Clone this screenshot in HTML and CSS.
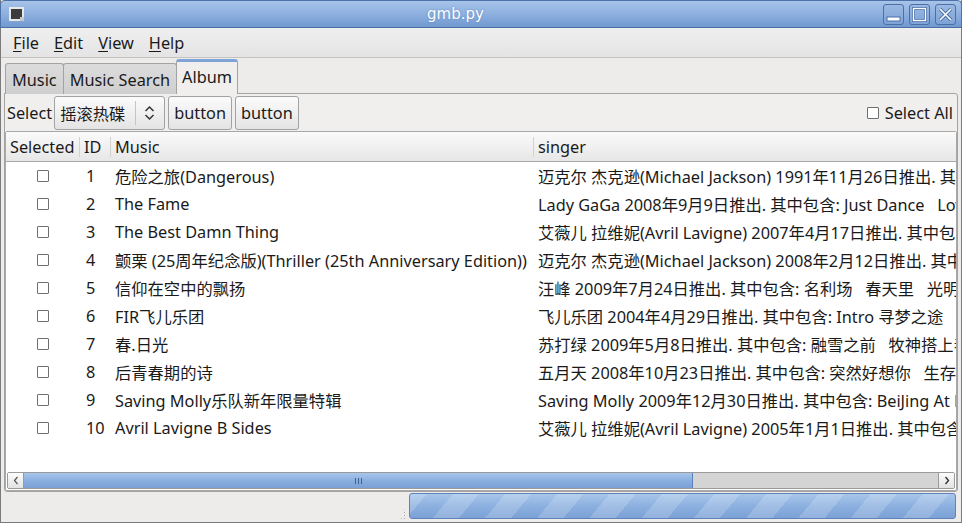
FILE: index.html
```html
<!DOCTYPE html>
<html>
<head>
<meta charset="utf-8">
<title>gmb.py</title>
<link rel="stylesheet" href="styles.css">
</head>
<body>
<div class="window">
  <div class="titlebar">
    <div class="appicon"><div class="appicon-screen"></div></div>
    <div class="title">gmb.py</div>
    <div class="wbtns">
      <div class="wbtn"><svg width="21" height="21" viewBox="0 0 21 21"><rect x="4" y="13" width="13" height="4" fill="#fff" stroke="#4a6ea6" stroke-width="1"/></svg></div>
      <div class="wbtn"><svg width="21" height="21" viewBox="0 0 21 21"><rect x="4.5" y="4.5" width="12" height="12" fill="none" stroke="#4a6ea6" stroke-width="3"/><rect x="4.5" y="4.5" width="12" height="12" fill="none" stroke="#fff" stroke-width="1.4"/></svg></div>
      <div class="wbtn"><svg width="21" height="21" viewBox="0 0 21 21"><path d="M5 5 L16 16 M16 5 L5 16" stroke="#4a6ea6" stroke-width="3.4"/><path d="M5 5 L16 16 M16 5 L5 16" stroke="#fff" stroke-width="1.6"/></svg></div>
    </div>
  </div>
  <div class="menubar">
    <span class="menu"><u>F</u>ile</span>
    <span class="menu"><u>E</u>dit</span>
    <span class="menu"><u>V</u>iew</span>
    <span class="menu"><u>H</u>elp</span>
  </div>
  <div class="notebook">
    <div class="tabs">
      <div class="tab">Music</div>
      <div class="tab">Music Search</div>
      <div class="tab active">Album</div>
    </div>
    <div class="panel">
      <div class="toolbar">
        <span class="label">Select</span>
        <div class="combo">
          <span class="combo-text">摇滚热碟</span>
          <span class="combo-sep"></span>
          <svg class="combo-arrow" width="11" height="16" viewBox="0 0 11 16"><path d="M1.5 6 L5.5 2 L9.5 6 M1.5 10 L5.5 14 L9.5 10" fill="none" stroke="#333" stroke-width="1.5"/></svg>
        </div>
        <div class="btn">button</div>
        <div class="btn">button</div>
        <div class="spacer"></div>
        <label class="selall"><span class="cb"></span>Select All</label>
      </div>
      <div class="tree">
        <div class="thead">
          <div class="th c1">Selected</div>
          <div class="th c2">ID</div>
          <div class="th c3">Music</div>
          <div class="th c4">singer</div>
        </div>
        <div class="tbody">
          <div class="tr"><div class="td c1"><span class="cb"></span></div><div class="td c2">1</div><div class="td c3">危险之旅(Dangerous)</div><div class="td c4">迈克尔 杰克逊(Michael Jackson) 1991年11月26日推出. 其中包含: Jam</div></div>
          <div class="tr"><div class="td c1"><span class="cb"></span></div><div class="td c2">2</div><div class="td c3">The Fame</div><div class="td c4">Lady GaGa 2008年9月9日推出. 其中包含: Just Dance   LoveGame</div></div>
          <div class="tr"><div class="td c1"><span class="cb"></span></div><div class="td c2">3</div><div class="td c3">The Best Damn Thing</div><div class="td c4">艾薇儿 拉维妮(Avril Lavigne) 2007年4月17日推出. 其中包含: Girlfriend</div></div>
          <div class="tr"><div class="td c1"><span class="cb"></span></div><div class="td c2">4</div><div class="td c3">颤栗 (25周年纪念版)(Thriller (25th Anniversary Edition))</div><div class="td c4">迈克尔 杰克逊(Michael Jackson) 2008年2月12日推出. 其中包含: Thriller</div></div>
          <div class="tr"><div class="td c1"><span class="cb"></span></div><div class="td c2">5</div><div class="td c3">信仰在空中的飘扬</div><div class="td c4">汪峰 2009年7月24日推出. 其中包含: 名利场   春天里   光明</div></div>
          <div class="tr"><div class="td c1"><span class="cb"></span></div><div class="td c2">6</div><div class="td c3">FIR飞儿乐团</div><div class="td c4">飞儿乐团 2004年4月29日推出. 其中包含: Intro 寻梦之途   我们的爱</div></div>
          <div class="tr"><div class="td c1"><span class="cb"></span></div><div class="td c2">7</div><div class="td c3">春.日光</div><div class="td c4">苏打绿 2009年5月8日推出. 其中包含: 融雪之前   牧神搭上春</div></div>
          <div class="tr"><div class="td c1"><span class="cb"></span></div><div class="td c2">8</div><div class="td c3">后青春期的诗</div><div class="td c4">五月天 2008年10月23日推出. 其中包含: 突然好想你   生存以上</div></div>
          <div class="tr"><div class="td c1"><span class="cb"></span></div><div class="td c2">9</div><div class="td c3">Saving Molly乐队新年限量特辑</div><div class="td c4">Saving Molly 2009年12月30日推出. 其中包含: BeiJing At Night</div></div>
          <div class="tr"><div class="td c1"><span class="cb"></span></div><div class="td c2">10</div><div class="td c3">Avril Lavigne B Sides</div><div class="td c4">艾薇儿 拉维妮(Avril Lavigne) 2005年1月1日推出. 其中包含: Fall</div></div>
        </div>
        <div class="hscroll">
          <div class="sb-arrow"><svg width="8" height="9" viewBox="0 0 8 9"><path d="M5.5 1 L2.5 4.5 L5.5 8" fill="none" stroke="#555" stroke-width="1.2"/></svg></div>
          <div class="sb-trough">
            <div class="sb-thumb"><span class="grip"></span></div>
          </div>
          <div class="sb-arrow"><svg width="8" height="9" viewBox="0 0 8 9"><path d="M2.5 1 L5.5 4.5 L2.5 8" fill="none" stroke="#333" stroke-width="1.4"/></svg></div>
        </div>
      </div>
    </div>
  </div>
  <div class="statusbar">
    <div class="status-text"></div>
    <div class="resize-grip"></div>
    <div class="progress"></div>
  </div>
</div>
</body>
</html>
```
FILE: styles.css
```css
html, body {
  margin: 0;
  padding: 0;
  background: #edeceb;
}
body {
  width: 962px;
  height: 523px;
  overflow: hidden;
  font-family: "Noto Sans", "Noto Sans CJK SC", sans-serif;
  font-size: 15px;
  color: #1a1a1a;
}
.window {
  width: 962px;
  height: 523px;
  box-sizing: border-box;
  display: flex;
  flex-direction: column;
  border-left: 1px solid #7b7b7b;
  border-right: 1px solid #7b7b7b;
  border-bottom: 1px solid #7b7b7b;
  background: #edeceb;
}
.titlebar {
  height: 28px;
  margin: 0 -1px;
  box-sizing: border-box;
  display: flex;
  align-items: center;
  background: linear-gradient(#a7c4e9, #8db0df 50%, #7199d0);
  border: 1px solid #4d72a9;
  border-bottom: 1px solid #4a6ea6;
  border-radius: 5px 5px 0 0;
  position: relative;
  flex: none;
}
.appicon {
  width: 15px;
  height: 14px;
  margin-left: 8px;
  box-sizing: border-box;
  border: 2px solid #e8e8e8;
  background: #3a3d3c;
  position: relative;
}
.appicon-screen {
  position: absolute;
  right: -2px;
  bottom: -2px;
  width: 4px;
  height: 4px;
  background: #c8c8c8;
}
.title {
  flex: 1;
  text-align: center;
  color: #fff;
  font-family: "DejaVu Sans", sans-serif;
  font-size: 15px;
  text-shadow: 0 0 2px #5a7fb8;
  padding-left: 4px;
}
.wbtns {
  display: flex;
  gap: 5px;
  margin-right: 5px;
}
.wbtn {
  width: 21px;
  height: 21px;
  box-sizing: border-box;
  border: 1px solid #4c6fa5;
  border-radius: 3px;
  background: linear-gradient(#9ab9e3, #7ea3d7);
  display: flex;
  align-items: center;
  justify-content: center;
  overflow: hidden;
}
.wbtn svg { flex: none; }
.menubar {
  height: 30px;
  box-sizing: border-box;
  display: flex;
  align-items: center;
  padding-left: 12px;
  gap: 15px;
  background: linear-gradient(#efefef, #e4e4e4);
  border-bottom: 1px solid #c2c2c2;
  flex: none;
  font-size: 16.3px;
}
.menu u { text-underline-offset: 2px; }
.notebook {
  flex: 1;
  display: flex;
  flex-direction: column;
  padding: 1px 3px 0 3px;
  min-height: 0;
}
.tabs {
  display: flex;
  height: 35px;
  align-items: flex-end;
  padding-left: 1px;
  position: relative;
  z-index: 1;
  margin-bottom: -1px;
}
.tab {
  height: 31px;
  box-sizing: border-box;
  padding: 1px 6px 0 6px;
  display: flex;
  align-items: center;
  border: 1px solid #a3a3a3;
  border-bottom: none;
  border-radius: 3px 3px 0 0;
  background: linear-gradient(#dcdcdc, #cfcfcf);
  font-size: 16.3px;
}
.tab + .tab { margin-left: -1px; }
.tab.active {
  height: 35px;
  background: #f0efee;
  border-color: #a3a3a3;
  border-top: 3px solid #7ea3d6;
  padding: 0 5px 2px 5px;
}
.panel {
  flex: 1;
  border: 1px solid #a3a3a3;
  border-radius: 0 3px 3px 3px;
  background: #f0efee;
  display: flex;
  flex-direction: column;
  min-height: 0;
}
.toolbar {
  height: 37px;
  display: flex;
  align-items: center;
  padding: 0 4px 0 2px;
  gap: 3px;
  flex: none;
  font-size: 16.3px;
}
.label { margin-right: -1px; }
.combo {
  width: 111px;
  height: 34px;
  box-sizing: border-box;
  border: 1px solid #a2a2a2;
  border-radius: 3px;
  background: linear-gradient(#fbfbfb, #e4e4e4);
  display: flex;
  align-items: center;
  padding-left: 5px;
}
.combo-text { flex: 1; }
.combo-sep {
  width: 1px;
  height: 24px;
  background: #c4c4c4;
  margin-right: 8px;
}
.combo-arrow { margin-right: 9px; }
.btn {
  height: 34px;
  box-sizing: border-box;
  border: 1px solid #a2a2a2;
  border-radius: 3px;
  background: linear-gradient(#fbfbfb, #e4e4e4);
  display: flex;
  align-items: center;
  padding: 0 5px;
}
.spacer { flex: 1; }
.selall {
  display: flex;
  align-items: center;
  gap: 6px;
}
.cb {
  display: inline-block;
  width: 12px;
  height: 12px;
  box-sizing: border-box;
  border: 1px solid #6f6f6f;
  background: #fff;
  border-radius: 1px;
}
.tree {
  flex: 1;
  border: 1px solid #a8a8a8;
  border-radius: 2px;
  background: #fff;
  display: flex;
  flex-direction: column;
  overflow: hidden;
  min-height: 0;
}
.thead {
  height: 30px;
  flex: none;
  display: flex;
  align-items: center;
  background: linear-gradient(#fafafa, #e7e7e7);
  border-bottom: 1px solid #a9a9a9;
  box-sizing: border-box;
  font-size: 16.3px;
}
.th {
  height: 100%;
  display: flex;
  align-items: center;
  position: relative;
  white-space: nowrap;
}
.th, .td { box-sizing: border-box; }
.th + .th::before {
  content: "";
  position: absolute;
  left: 0;
  top: 5px;
  bottom: 4px;
  width: 1px;
  background: #d2d2d2;
}
.c1 { width: 73px; flex: none; padding-left: 4px; }
.c2 { width: 31px; flex: none; padding-left: 5px; }
.c3 { width: 423px; flex: none; padding-left: 5px; }
.c4 { flex: 1; padding-left: 5px; }
.tbody {
  flex: 1;
  overflow: hidden;
  font-size: 16.3px;
}
.tr {
  height: 28px;
  display: flex;
  align-items: center;
  white-space: pre;
}
.td { overflow: hidden; }
.td.c1 {
  display: flex;
  justify-content: center;
  padding-left: 1px;
}
.td.c2 { padding-left: 7px; }
.td.c3 { padding-left: 5px; }
.td.c4 { padding-left: 5px; }
.hscroll {
  height: 17px;
  flex: none;
  display: flex;
  box-sizing: border-box;
  margin: 0 1px 1px 1px;
  background: #d4d4d4;
  border: 1px solid #9a9a9a;
  border-radius: 2px;
}
.sb-arrow {
  width: 15px;
  flex: none;
  display: flex;
  align-items: center;
  justify-content: center;
  background: linear-gradient(#fdfdfd, #e2e2e2);
  border-right: 1px solid #9a9a9a;
}
.sb-arrow:last-child {
  border-right: none;
  border-left: 1px solid #9a9a9a;
}
.sb-trough {
  flex: 1;
  display: flex;
}
.sb-thumb {
  width: 668px;
  background: linear-gradient(#a8c6ea, #8aafe0 50%, #7aa0d6);
  border-right: 1px solid #5b7fb6;
  display: flex;
  align-items: center;
  justify-content: center;
}
.grip {
  width: 7px;
  height: 6px;
  background: linear-gradient(90deg, #3f5f8f 1px, transparent 1px) 0 0 / 3px 6px repeat-x;
}
.statusbar {
  height: 30px;
  flex: none;
  display: flex;
  align-items: stretch;
  padding: 1px 5px 3px 0;
  box-sizing: border-box;
}
.status-text { flex: 1; max-width: 396px; }
.resize-grip {
  width: 10px;
  background: radial-gradient(circle, #a8a8a8 0.8px, transparent 1px) 0 0 / 3px 3px;
  clip-path: polygon(100% 40%, 100% 100%, 40% 100%);
}
.progress {
  flex: 1;
  margin-left: 2px;
  border: 1px solid #5f82b8;
  border-radius: 3px;
  background:
    repeating-linear-gradient(-50deg, rgba(255,255,255,0) 0 20px, rgba(255,255,255,0.18) 20px 40px),
    linear-gradient(#a8c6ea, #8cb0df 50%, #7ba1d6);
}
```
